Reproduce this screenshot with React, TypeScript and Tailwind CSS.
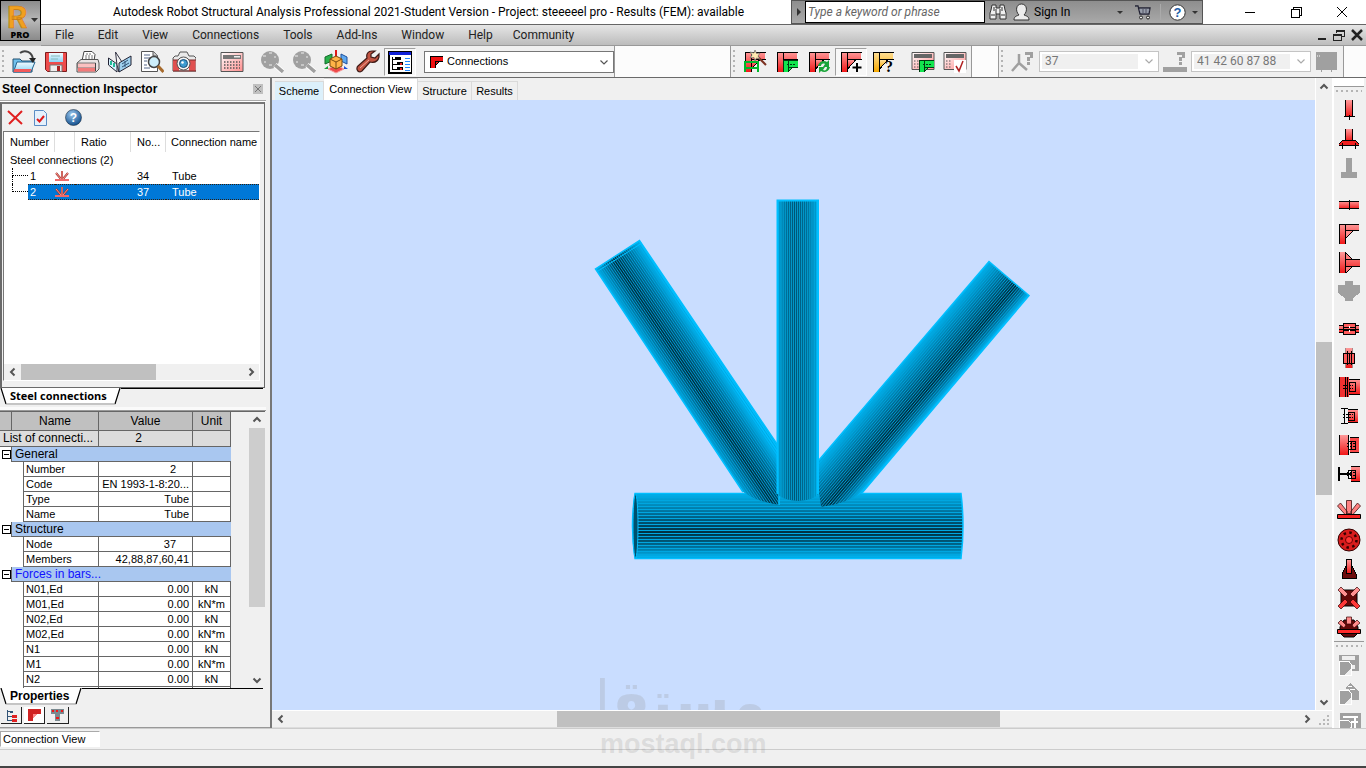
import { ReactNode } from 'react'

const ui = "font-['Open_Sans','Noto_Sans',sans-serif]"

/* ---------- shared bits ---------- */

function Px({ size = 24, children }: { size?: number; children: ReactNode }) {
  return (
    <svg width={size} height={size} viewBox="0 0 24 24" className="shrink-0" aria-hidden="true">
      {children}
    </svg>
  )
}

function Defs() {
  return (
    <svg width="0" height="0" className="absolute" aria-hidden="true">
      <defs>
        <linearGradient id="red" x1="0" y1="0" x2="0" y2="1">
          <stop offset="0" stopColor="#ff9a9a" />
          <stop offset="1" stopColor="#f01818" />
        </linearGradient>
        <linearGradient id="amber" x1="0" y1="0" x2="0" y2="1">
          <stop offset="0" stopColor="#ffe09a" />
          <stop offset="1" stopColor="#f5a800" />
        </linearGradient>
        <linearGradient id="blue" x1="0" y1="0" x2="0" y2="1">
          <stop offset="0" stopColor="#f2fbff" />
          <stop offset="1" stopColor="#8cd4f5" />
        </linearGradient>
        <linearGradient id="calc" x1="0" y1="0" x2="1" y2="1">
          <stop offset="0" stopColor="#ffffff" />
          <stop offset="1" stopColor="#ff8c8c" />
        </linearGradient>
        <radialGradient id="ball" cx="0.4" cy="0.3" r="0.7">
          <stop offset="0" stopColor="#9cc8ee" />
          <stop offset="1" stopColor="#14518f" />
        </radialGradient>
      </defs>
    </svg>
  )
}

function Chevron({ dir, color = '#555', thin }: { dir: 'up' | 'down' | 'left' | 'right'; color?: string; thin?: boolean }) {
  const paths = {
    up: 'M1.5 6.5 5 3l3.5 3.5',
    down: 'M1.5 3.5 5 7l3.5-3.5',
    left: 'M6.5 1.5 3 5l3.5 3.5',
    right: 'M3.5 1.5 7 5 3.5 8.5',
  }
  return (
    <svg width="10" height="10" viewBox="0 0 10 10" aria-hidden="true">
      <path d={paths[dir]} fill="none" stroke={color} strokeWidth={thin ? 1.2 : 2} />
    </svg>
  )
}

function Grip() {
  return <span className="my-1 ml-0.5 mr-1 w-0.5 self-stretch bg-[repeating-linear-gradient(#b4b4b4_0_2px,transparent_2px_5px)]" />
}

function ToolButton({ label, active, children }: { label: string; active?: boolean; children: ReactNode }) {
  return (
    <button
      type="button"
      aria-label={label}
      className={`flex h-7 w-8 shrink-0 items-center justify-center ${
        active ? 'border border-[#a0a0a0] border-b-white border-r-white bg-[#f7f7f7]' : ''
      }`}
    >
      {children}
    </button>
  )
}

/* ---------- main toolbar icons ---------- */

const OpenIcon = () => (
  <Px>
    <path d="M1 9h7l2 2h10v11H1z" fill="#6fc0ec" stroke="#24506f" />
    <path d="M5 12h18l-4 10H1.500z" fill="url(#blue)" stroke="#24658f" />
    <path d="M2.500 19h17l-1.300 3H1.500z" fill="#f25a5a" />
    <path d="M8 3c5-4 12-1 13 6" fill="none" stroke="#444" strokeWidth="2" />
    <path d="M17 8h7l-3 5z" fill="#222" />
  </Px>
)
const SaveIcon = () => (
  <Px>
    <path d="M1.500 2.500h21v19h-19l-2-2z" fill="#ee4b4b" stroke="#7c1c1c" />
    <path d="M5 3h14v9H5z" fill="url(#blue)" />
    <path d="M7 6h9M7 9h7" stroke="#8bb" />
    <path d="M6 15h12v6.500H6z" fill="#eee" stroke="#777" />
    <path d="M13 16h3v5h-3z" fill="#a22" />
  </Px>
)
const PrintIcon = () => (
  <Px>
    <path d="M6 11 8 1.500h8l3 3L18 11z" fill="#fff" stroke="#444" />
    <path d="M10 4h5M9 6h8M9 8h8" stroke="#777" strokeDasharray="2 1" />
    <path d="M1 13 5 9.500h17l1 3.500v6l-3 3H1z" fill="#e9e4e4" stroke="#555" />
    <path d="M1.500 13h18v5h-18z" fill="#fbc0c0" stroke="#777" />
    <path d="M2 18h17v3.500H2z" fill="#f27a7a" />
    <path d="M19.500 13v8" stroke="#444" />
  </Px>
)
const BookIcon = () => (
  <Px>
    <path d="M.500 8 9 14v8L.500 15z" fill="#d8f1ff" stroke="#223" />
    <path d="M7.500 2 14 12l-3 10-2-7z" fill="#f3f3f3" stroke="#334" />
    <path d="M3 11v4M6 13v4" stroke="#2b9" strokeWidth="2" />
    <path d="M11 22V13l12-7v9z" fill="#9fd0ee" stroke="#223" />
    <path d="m14 14 6-4M14 17l7-4M17 11v6" stroke="#357" />
  </Px>
)
const PreviewIcon = () => (
  <Px>
    <path d="M1.500 1.500h12l4 4v16h-16z" fill="#fff" stroke="#555" />
    <path d="M13 1.500V6h5" fill="#ccc" stroke="#555" />
    <path d="M4 5h6M4 8h6M4 11h3M4 15h3M4 18h6" stroke="#568" />
    <circle cx="14" cy="12" r="5.500" fill="#cdeefa" stroke="#444" strokeWidth="1.500" />
    <path d="m18 16 5.500 6" stroke="#a76a2c" strokeWidth="3" />
  </Px>
)
const CameraIcon = () => (
  <Px>
    <path d="M6 6 8 2h7l2 4h5l2 2v13H1V8l2-2z" fill="#e9e9e9" stroke="#555" />
    <path d="M1 10h6v11H1zM17 10h6.500v11H17z" fill="#e05050" />
    <path d="M1 10h23M1 21h23" stroke="#7c2d2d" />
    <circle cx="11.500" cy="13.500" r="6.500" fill="#f4f4f4" stroke="#555" />
    <circle cx="11.500" cy="13.500" r="4" fill="#3d9bd0" stroke="#1c4f78" />
    <circle cx="10.500" cy="12.500" r="1.300" fill="#fff" />
  </Px>
)
const CalcIcon = () => (
  <Px>
    <path d="M1 2.500h22v19H1z" fill="url(#calc)" stroke="#555" />
    <path d="M3 5h18v4H3z" fill="#777" />
    <path d="M14 6h6v1.500h-6z" fill="#eee" />
    <path d="M4 12h16M4 15h16M4 18h16" stroke="#555" strokeWidth="1.500" strokeDasharray="1.500 1.500" />
  </Px>
)
const GrayZoomIcon = () => (
  <Px>
    <circle cx="10" cy="10" r="9" fill="#a0a0a0" />
    <path d="M3 6h3M9 3h3M4 12h2M14 7h2M9 15h3" stroke="#eee" />
    <path d="m15 15 8 7" stroke="#fff" strokeWidth="5" />
    <path d="m15 15 8 7" stroke="#a0a0a0" strokeWidth="3.500" />
  </Px>
)
const CubeIcon = () => (
  <Px>
    <path d="m1 7 7-3v7l-7 3z" fill="#28b04a" stroke="#146a2a" />
    <path d="m23 7-6-3v7l6 3z" fill="#5fa8ee" stroke="#1d4f9c" />
    <path d="M12 0v8" stroke="#e01818" strokeWidth="2" />
    <path d="m4 19 8 4 8-4-8-4z" fill="#ee4a4a" stroke="#f6a0a0" />
    <path d="m12 6 6 3v7l-6 3-6-3V9z" fill="#ffb347" stroke="#7a4a0e" />
    <path d="m6 9 6 3 6-3M12 12v7" fill="none" stroke="#7a4a0e" />
    <path d="m0 19 4-3v3z" fill="#18a038" />
    <path d="m24 19-4-3v3z" fill="#1850d8" />
  </Px>
)
const WrenchIcon = () => (
  <Px>
    <path
      d="M16 1c-4 0-6 3-5 7l-9 8c-2 2-1 6 2 6l2-1 8-9c5 1 8-1 9-5V4l-4 4-4-1V4l4-3z"
      fill="#c25442"
      stroke="#3e1a16"
      strokeWidth="1.200"
    />
    <path d="m4 18 9-8" stroke="#f3a79a" />
  </Px>
)
const InspectorIcon = () => (
  <Px>
    <g shapeRendering="crispEdges">
      <path d="M0 1h24v22H0z" fill="#fff" />
      <path d="M.500 1.500h23v21H.500z" fill="none" stroke="#000" strokeWidth="2" />
      <path d="M1 2h22v3H1z" fill="#1020d8" />
      <path d="M4 7v12M4 9h5M4 14h5M4 19h5" stroke="#000" fill="none" />
      <path d="M7 7h6v3H7zM9 12h6v3H9zM9 17h6v3H9z" fill="#000" />
      <path d="M12 13h2v2h-2zM12 18h2v2h-2z" fill="#e22" />
      <path d="M17 8h5M17 11h5M17 14h5M17 17h5M17 20h5" stroke="#28f" />
    </g>
  </Px>
)

/* ---------- connection toolbar icons ---------- */

const Corner = ({ fill = 'url(#red)' }: { fill?: string }) => (
  <g shapeRendering="crispEdges">
    <path d="M2 2h6v20H2zM8 2h14v7H8z" fill={fill} />
    <path d="M9 10h7l-7 8z" fill={fill} />
    <path d="M2 2.500h21M8 9.500h15M2.500 2v20M8.500 2v20M17 9.500l-8 9" stroke="#000" fill="none" />
  </g>
)
const WandIcon = () => (
  <Px>
    <Corner />
    <g shapeRendering="crispEdges">
      <path d="M1 12h15M1 18h15M2 12v10M15 12v10" stroke="#00b82b" strokeWidth="2" />
    </g>
    <path d="m14 6 9 9" stroke="#7c3020" strokeWidth="2" />
    <path d="m12 0 1.500 3.500L17 3l-2 3 2 3-3.500-1L12 11l-1-3.500L7 8l2-3-2-3 4 1z" fill="#ffe9b0" stroke="#666" strokeWidth=".7" />
  </Px>
)
const GreenConn = () => (
  <g shapeRendering="crispEdges">
    <path d="M8 10h15v8h-6l-4 4H8z" fill="#12e64e" />
    <path d="M8 10.500h15M8 22V10M13.500 10v12M14 17.500h9M17 18l-4 4" stroke="#003c12" fill="none" />
    <path d="M12 14.500h9" stroke="#003c12" strokeDasharray="2 1" />
  </g>
)
const EditConnIcon = () => (
  <Px>
    <Corner />
    <GreenConn />
  </Px>
)
const RefreshConnIcon = () => (
  <Px>
    <Corner />
    <path d="M11 16c1-5 6-6 9-4l2-2v7h-6l2-3c-2-1-4 0-4 2zM23 17c-1 5-6 6-9 4l-2 2v-6h6l-2 3c2 1 4 0 4-3z" fill="#1aa53a" />
  </Px>
)
const AddConnIcon = () => (
  <Px>
    <Corner />
    <path d="M18 13v9M13.500 17.500h9" stroke="#000" strokeWidth="2" />
  </Px>
)
const AskConnIcon = () => (
  <Px>
    <Corner fill="url(#amber)" />
    <text x="14" y="22" fontSize="16" fontWeight="700" fontFamily="Liberation Serif">
      ?
    </text>
  </Px>
)
const CalcConnIcon = () => (
  <Px>
    <path d="M1 2.500h22v17H1z" fill="url(#calc)" stroke="#555" />
    <path d="M3 4h18v4H3z" fill="#666" />
    <path d="M3 11h6M3 14h6M3 17h6" stroke="#555" strokeDasharray="1.500 1.500" />
    <GreenConn />
  </Px>
)
const CalcCheckIcon = () => (
  <Px>
    <path d="M1 2.500h22v17H1z" fill="url(#calc)" stroke="#555" />
    <path d="M3 4h18v4H3z" fill="#666" />
    <path d="M3 11h6M3 14h6M3 17h6" stroke="#555" strokeDasharray="1.500 1.500" />
    <path d="M11 10h12v13H11z" fill="#fff" />
    <path d="m13 16 3 5 4-10" fill="none" stroke="#b02020" strokeWidth="1.500" />
  </Px>
)
const GrayQuestion = () => <path d="M14 2h8v6h-3v3h-3V7h3V5h-5zM16 12h3v3h-3z" fill="#a0a0a0" />
const GrayNodeIcon = () => (
  <Px>
    <path d="M8 4v9L1 21M8 13l8 7" fill="none" stroke="#a0a0a0" strokeWidth="2.500" />
    <GrayQuestion />
  </Px>
)
const GrayBarIcon = () => (
  <Px>
    <GrayQuestion />
    <path d="M0 17h24v5H0z" fill="#a0a0a0" />
  </Px>
)
const GrayTableIcon = () => (
  <Px>
    <path d="M1 2h21v18H1zM6 20h1v2H6zM16 20h1v2h-1z" fill="#a0a0a0" />
    <path d="M2 6h4" stroke="#fff" strokeDasharray="1 1" />
  </Px>
)

/* ---------- side toolbar icons ---------- */

const R = 'url(#red)'

const sideIcons: { label: string; art: ReactNode }[][] = [
  [
    {
      label: 'Pinned column base',
      art: (
        <>
          <path d="M9 2h6v17H9z" fill={R} />
          <path d="M8.500 2v17M15.500 2v17M7 18.500h11M12.500 17v5" stroke="#000" fill="none" />
        </>
      ),
    },
    {
      label: 'Fixed column base',
      art: (
        <>
          <path d="M9 2h6v12H9z" fill={R} />
          <path d="M8.500 2v12M15.500 2v12" stroke="#000" />
          <path d="M6 13h12l4 4v2H2v-2z" fill="#f02020" />
          <path d="M6 13.500h12M2 18.500h20M2 17l4-4M22 17l-4-4" stroke="#000" />
          <path d="M5.500 16v6M18.500 16v6" stroke="#000" />
        </>
      ),
    },
    { label: 'Concrete base', art: <path d="M9 2h6v14h5v6H4v-6h5z" fill="#a0a0a0" /> },
  ],
  [
    {
      label: 'Beam splice',
      art: (
        <>
          <path d="M2 8h20v8H2z" fill={R} />
          <path d="M2 8.500h20M2 15.500h20M12.500 7v10" stroke="#000" />
        </>
      ),
    },
    {
      label: 'Frame knee',
      art: (
        <>
          <path d="M2 2h7v20H2zM9 2h13v7H9z" fill={R} />
          <path d="M9 9h7l-7 7z" fill="#ff8c8c" />
          <path d="M2.500 22V2.500H22M8.500 3v19M9 8.500h13M16 9l-7 7" fill="none" stroke="#000" />
        </>
      ),
    },
    {
      label: 'Beam to column',
      art: (
        <>
          <path d="M2 1h7v21H2zM9 8h14v8H9z" fill={R} />
          <path d="M9 2v6h6zM9 16h6l-6 6z" fill="#ff7a7a" />
          <path d="M2.500 1v21M8.500 1v21M9 8.500h14M9 15.500h14M9 2l6 6M15 16l-6 6" stroke="#000" />
        </>
      ),
    },
    { label: 'Gusset plate', art: <path d="M8 1h8v4h7v8l-7 5v3H8v-3l-7-5V5h7z" fill="#a0a0a0" /> },
  ],
  [
    {
      label: 'Horizontal splice',
      art: (
        <>
          <path d="M2 8h20v8H2z" fill={R} />
          <path d="M2 8.500h20M2 15.500h20" stroke="#000" />
          <path d="M6.500 6.500h12v11h-12z" fill="#ff5c5c" stroke="#000" />
          <path d="M6 10.500h12M6 13.500h12M2 12h20" fill="none" stroke="#000" />
          <path d="M12 9h1v2h-1zM12 13h1v2h-1z" fill="#fff" />
        </>
      ),
    },
    {
      label: 'Vertical splice',
      art: (
        <>
          <path d="M8 2h8v20H8z" fill={R} />
          <path d="M8.500 2v20M15.500 2v20" stroke="#a88" />
          <path d="M6.500 7.500h11v10h-11z" fill="#ff5c5c" stroke="#000" />
          <path d="M10.500 5v14M14.500 5v14M12.500 8v10" stroke="#000" fill="none" />
        </>
      ),
    },
    {
      label: 'Web angle to column',
      art: (
        <>
          <path d="M2 2h10v20H2z" fill="#f03030" />
          <path d="M12 4h11v15H12z" fill={R} />
          <path d="M2.500 2v20M8.500 2v20M10.500 2v20M12 4.500h11M12 19.500h11M12 7.500h6v9h-6z" stroke="#000" fill="none" />
          <path d="M6 10.500h10M6 13.500h10" stroke="#000" strokeDasharray="2 1" />
        </>
      ),
    },
    {
      label: 'Beam to web',
      art: (
        <>
          <path d="M4 4.500h7M4 19.500h7M7.500 5v14" stroke="#000" />
          <path d="M11 5h10v14H11z" fill={R} />
          <path d="M11 5.500h10M11 18.500h10M11 8.500h6v8h-6z" stroke="#000" fill="none" />
          <path d="M6 10.500h10M6 13.500h10" stroke="#000" strokeDasharray="2 1" />
        </>
      ),
    },
    {
      label: 'Fin plate',
      art: (
        <>
          <path d="M2 2h10v20H2z" fill={R} />
          <path d="M2.500 2v20M11.500 2v20" stroke="#000" />
          <path d="M13 4h9v15h-9z" fill="#f84848" />
          <path d="M13 4.500h9M13 19.500h9M11.500 8.500h7v8h-7zM14.500 8v8" fill="none" stroke="#000" />
          <path d="M10 10.500h9M10 13.500h9" stroke="#000" strokeDasharray="2 1" />
        </>
      ),
    },
    {
      label: 'Bracket',
      art: (
        <>
          <path d="M2 5v14M2 12h12" stroke="#000" strokeWidth="2" />
          <path d="M14 4h9v15h-9z" fill={R} />
          <path d="M14 4.500h9M14 19.500h9M11.500 8.500h7v8h-7zM14.500 8v8" fill="none" stroke="#000" />
          <path d="M10 10.500h9M10 13.500h9" stroke="#000" strokeDasharray="2 1" />
        </>
      ),
    },
  ],
  [
    {
      label: 'Tube',
      art: (
        <g shapeRendering="auto">
          <path d="M9.500 1.500h5v13h-5zM.500 7l3-3 7 9-2 3zM23.500 7l-3-3-7 9 2 3z" fill="#ff8080" stroke="#401010" strokeWidth=".8" />
          <path d="M.500 15.500h23v4H.500z" fill="#f42020" stroke="#000" />
        </g>
      ),
    },
    {
      label: 'Flange',
      art: (
        <g shapeRendering="auto">
          <circle cx="12" cy="12" r="11" fill="#d81c1c" stroke="#300" />
          <circle cx="12" cy="12" r="7.500" fill="none" stroke="#300" strokeWidth="2.500" strokeDasharray="2.500 3.400" />
          <circle cx="12" cy="12" r="3.500" fill="#ff3434" stroke="#600" />
        </g>
      ),
    },
    {
      label: 'Base cone',
      art: (
        <>
          <path d="m9 9-4 8v4h14v-4l-4-8z" fill="#6c0c0c" stroke="#000" />
          <path d="M9.500 2.500h5v14h-5z" fill={R} stroke="#000" />
        </>
      ),
    },
    {
      label: 'Cross bracing',
      art: (
        <g shapeRendering="auto">
          <path d="M4 4h16v16H4z" fill="#640808" stroke="#000" />
          <path d="m1 4 3-3 7 7-3 3zM23 4l-3-3-7 7 3 3z" fill="#ff9090" stroke="#300" strokeWidth=".7" />
          <path d="m1 20 3 3 7-7-3-3zM23 20l-3 3-7-7 3-3z" fill="#ff3838" stroke="#300" strokeWidth=".7" />
        </g>
      ),
    },
    {
      label: 'Chord gusset',
      art: (
        <g shapeRendering="auto">
          <path d="M3 12 7 5h10l4 7v6l-4 4H7l-4-4z" fill="#640808" stroke="#000" />
          <path d="M9.500 2v7h5V2zM1 8l3-3 5 5-2 3zM23 8l-3-3-5 5 2 3z" fill="#ff8a8a" stroke="#300" strokeWidth=".7" />
          <path d="M.500 14.500h23v4H.500z" fill="#ff2a2a" stroke="#000" />
        </g>
      ),
    },
  ],
]

const disabledIcons: { label: string; art: ReactNode }[] = [
  {
    label: 'Save view',
    art: (
      <>
        <path d="M2 2h20v16h-9V8H2z" fill="#a0a0a0" />
        <path d="M5 3h13v4H5zM15 12h3v4h-3z" fill="#eee" />
        <path d="M2 8h9l3 3v11H2z" fill="#a0a0a0" stroke="#fff" />
        <path d="m8 22 6-7v7z" fill="#f0f0f0" />
      </>
    ),
  },
  {
    label: 'Print view',
    art: (
      <>
        <path d="m8 6 5-5 9 8v9h-9V8z" fill="#a0a0a0" />
        <path d="M11 4h4M13 7h5" stroke="#fff" />
        <path d="M2 8h9l3 3v11H2z" fill="#a0a0a0" stroke="#fff" />
        <path d="m8 22 6-7v7z" fill="#f0f0f0" />
      </>
    ),
  },
  {
    label: 'Table view',
    art: (
      <>
        <path d="M3 2h21v20H3z" fill="#a0a0a0" />
        <path d="M6 6h15M14 11h7M18 6v14" stroke="#fff" strokeWidth="2" />
        <path d="M2 9h9l3 3v10H2z" fill="#a0a0a0" stroke="#fff" />
        <path d="m8 22 6-7v7z" fill="#f0f0f0" />
      </>
    ),
  },
]

/* ---------- header ---------- */

const menus = ['File', 'Edit', 'View', 'Connections', 'Tools', 'Add-Ins', 'Window', 'Help']

function SearchCluster() {
  return (
    <div className="flex w-[412px] shrink-0 items-center border border-[#555] bg-linear-to-b from-[#8e8e8e] to-[#a9a9a9]">
      <button type="button" aria-label="Toggle search" className="flex w-[13px] justify-center">
        <svg width="6" height="8" viewBox="0 0 6 8">
          <path d="M1 0v8l4-4z" fill="#333" />
        </svg>
      </button>
      <input
        aria-label="Search help"
        placeholder="Type a keyword or phrase"
        className="h-[22px] w-[180px] border border-black bg-white px-0.5 text-xs italic placeholder:text-[#666]"
      />
      <button type="button" aria-label="Search" className="ml-1">
        <svg width="18" height="18" viewBox="0 0 18 18">
          <path d="M3 2h4v3h4V2h4l1 5 1 3v6h-6v-5H7v5H1v-6l1-3z" fill="#f0f0f0" stroke="#333" />
          <path d="M7 6v5M11 6v5M2 12h4M12 12h4M5 4v4M13 4v4" stroke="#333" />
        </svg>
      </button>
      <button type="button" className="ml-1.5 flex items-center gap-1 text-xs text-black">
        <svg width="17" height="18" viewBox="0 0 17 18">
          <path d="M1 17c0-4 3-4 5-5-4-4-3-11 2.500-11S15 8 11 12c2 1 5 1 5 5z" fill="#ececec" stroke="#333" />
        </svg>
        Sign In
      </button>
      <span className="ml-auto mr-[11px] border-x-[3px] border-t-[3px] border-x-transparent border-t-[#333]" />
      <button type="button" aria-label="App store">
        <svg width="18" height="18" viewBox="0 0 18 18">
          <path d="M1 3h3l2 8h9l1-6H5" fill="#d9e6ee" stroke="#223" strokeWidth="1.300" />
          <path d="M5 7h11M6 9h9M9 5v6M12 5v6" stroke="#556" />
          <circle cx="7" cy="14.500" r="1.500" fill="#eee" stroke="#222" />
          <circle cx="14" cy="14.500" r="1.500" fill="#eee" stroke="#222" />
        </svg>
      </button>
      <span className="mx-2 h-4 w-px bg-[#aaa]" />
      <button type="button" aria-label="Help">
        <svg width="17" height="17" viewBox="0 0 17 17">
          <circle cx="8.500" cy="8.500" r="7.700" fill="#fff" stroke="#333" />
          <text x="8.500" y="13" fontSize="13" fontWeight="700" textAnchor="middle" fill="#1d5ea8" fontFamily="Liberation Sans">
            ?
          </text>
        </svg>
      </button>
      <span className="ml-1.5 mr-1 border-x-[3px] border-t-[3px] border-x-transparent border-t-[#333]" />
    </div>
  )
}

function WindowControls() {
  return (
    <div className="ml-6 mr-px flex shrink-0">
      <button type="button" aria-label="Minimize" className="flex w-[46px] items-center justify-center">
        <span className="h-px w-2.5 bg-black" />
      </button>
      <button type="button" aria-label="Restore" className="flex w-[46px] items-center justify-center">
        <svg width="11" height="11" viewBox="0 0 11 11" shapeRendering="crispEdges">
          <path d="M.500 2.500h8v8h-8zM2.500 2.500v-2h8v8h-2" fill="none" stroke="#000" />
        </svg>
      </button>
      <button type="button" aria-label="Close" className="flex w-[46px] items-center justify-center">
        <svg width="12" height="12" viewBox="0 0 12 12">
          <path d="m1 1 10 10M11 1 1 11" stroke="#000" />
        </svg>
      </button>
    </div>
  )
}

function Header() {
  return (
    <header className="flex shrink-0 bg-[#c0c0c0] font-['Roboto',sans-serif]">
      <button
        type="button"
        aria-label="Application menu"
        className="h-[41px] w-[41px] shrink-0 border border-black bg-linear-to-b from-[#8c8c8c] via-[#b8b8b8] to-[#8a8a8a]"
      >
        <svg width="39" height="39" viewBox="0 0 39 39" className="overflow-visible">
          <text x="6" y="27" fontSize="32" fontWeight="700" fontFamily="Roboto" fill="#f0a020" stroke="#c47a12" strokeWidth=".6">
            R
          </text>
          <path d="M30 17h7l-3.500 4z" fill="#333" />
          <text x="19" y="37" fontSize="9" fontWeight="800" textAnchor="middle" fontFamily="Open Sans">
            PRO
          </text>
        </svg>
      </button>
      <div className="min-w-0 flex-1">
        <div className="flex h-[25px] border-b border-[#666] bg-white">
          <h1 className="min-w-0 flex-1 truncate pl-[72px] text-xs leading-6 text-black">
            Autodesk Robot Structural Analysis Professional 2021-Student Version - Project: steeeeel pro - Results (FEM): available
          </h1>
          <SearchCluster />
          <WindowControls />
        </div>
        <nav className="flex h-[21px] items-center border-b border-[#999] bg-linear-to-b from-[#e6e6e6] to-[#bcbcbc] pl-3.5 text-xs text-[#222]">
          <div className="flex gap-6">
            {menus.map((m) => (
              <button key={m} type="button">
                {m}
              </button>
            ))}
          </div>
          <button type="button" className="ml-5">
            Community
          </button>
          <div className="ml-auto mr-[3px] flex items-center gap-1.5 text-[#222]">
            <button type="button" aria-label="Minimize document" className="h-2.5">
              <span className="mt-2 block h-0.5 w-2 bg-[#222]" />
            </button>
            <button type="button" aria-label="Restore document">
              <svg width="13" height="12" viewBox="0 0 13 12" shapeRendering="crispEdges">
                <path d="M4 4V1h8v6H9M1 5h8v6H1z" fill="none" stroke="#222" />
                <path d="M4 2h8M1 6h8" stroke="#222" />
              </svg>
            </button>
            <button type="button" aria-label="Close document">
              <svg width="12" height="12" viewBox="0 0 12 12">
                <path d="m1 1 10 10M11 1 1 11" stroke="#222" strokeWidth="2.500" />
              </svg>
            </button>
          </div>
        </nav>
      </div>
    </header>
  )
}

/* ---------- toolbars ---------- */

function NumberSelect({ label, value }: { label: string; value: string }) {
  return (
    <div className="relative h-[21px] w-[120px] shrink-0 border border-[#c4c4c4] bg-white p-0.5">
      <select
        aria-label={label}
        disabled
        className="block h-[15px] w-[96px] appearance-none bg-[#f0f0f0] pl-[3px] font-['Roboto',sans-serif] text-xs leading-[15px] text-[#777] opacity-100"
      >
        <option>{value}</option>
      </select>
      <span className="pointer-events-none absolute right-1 top-1">
        <Chevron dir="down" color="#aaa" thin />
      </span>
    </div>
  )
}

function Toolbars() {
  return (
    <div className="flex h-8 shrink-0 items-stretch border-b border-[#6a6a6a] bg-[#fcfcfc]">
      <div className="flex items-center border-r border-[#999] bg-[#f0f0f0]">
        <Grip />
        <ToolButton label="Open"><OpenIcon /></ToolButton>
        <ToolButton label="Save"><SaveIcon /></ToolButton>
        <ToolButton label="Print"><PrintIcon /></ToolButton>
        <ToolButton label="Printout composition"><BookIcon /></ToolButton>
        <ToolButton label="Print preview"><PreviewIcon /></ToolButton>
        <ToolButton label="Screen capture"><CameraIcon /></ToolButton>
        <span className="w-4" />
        <ToolButton label="Calculations"><CalcIcon /></ToolButton>
        <span className="w-2" />
        <ToolButton label="Zoom window"><GrayZoomIcon /></ToolButton>
        <ToolButton label="Zoom all"><GrayZoomIcon /></ToolButton>
        <ToolButton label="Projection"><CubeIcon /></ToolButton>
        <ToolButton label="Tools"><WrenchIcon /></ToolButton>
        <ToolButton label="Connection inspector" active><InspectorIcon /></ToolButton>
        <div className="relative ml-2 flex w-[190px] items-center">
          <select
            aria-label="Layout"
            className="h-[22px] w-full appearance-none border border-[#777] bg-white pl-[22px] text-[11px] text-black"
          >
            <option>Connections</option>
          </select>
          <svg width="14" height="12" viewBox="0 0 14 12" className="pointer-events-none absolute left-[6px] top-[5px]" shapeRendering="crispEdges">
            <path d="M0 0h13v5H9l-4 4v3H0z" fill="#f01010" />
            <path d="M0 .500h13M5 5.500h8M5 5v7M.500 0v12M5 10l5-5" stroke="#000" fill="none" />
          </svg>
          <span className="pointer-events-none absolute right-[5px] top-[6px]">
            <Chevron dir="down" thin />
          </span>
        </div>
      </div>

      <div className="ml-[115px] flex shrink-0 items-center border-x border-[#999] bg-[#f0f0f0]">
        <Grip />
        <ToolButton label="Connection wizard"><WandIcon /></ToolButton>
        <ToolButton label="Edit connection"><EditConnIcon /></ToolButton>
        <ToolButton label="Update connection"><RefreshConnIcon /></ToolButton>
        <ToolButton label="New connection" active><AddConnIcon /></ToolButton>
        <ToolButton label="Connection query"><AskConnIcon /></ToolButton>
        <span className="w-2" />
        <ToolButton label="Calculate connection"><CalcConnIcon /></ToolButton>
        <ToolButton label="Verify connection"><CalcCheckIcon /></ToolButton>
      </div>

      <div className="ml-[26px] flex shrink-0 items-center border-x border-[#999] bg-[#f0f0f0]">
        <Grip />
        <ToolButton label="Node selection"><GrayNodeIcon /></ToolButton>
        <NumberSelect label="Node" value="37" />
        <ToolButton label="Bar selection"><GrayBarIcon /></ToolButton>
        <NumberSelect label="Bars" value="41 42 60 87 88" />
        <ToolButton label="Selection table"><GrayTableIcon /></ToolButton>
      </div>
    </div>
  )
}

/* ---------- left panel ---------- */

const connections = [
  { no: 1, node: 34, name: 'Tube', selected: false },
  { no: 2, node: 37, name: 'Tube', selected: true },
]

function TubeGlyph() {
  return (
    <svg width="14" height="12" viewBox="0 0 14 12" className="block" aria-hidden="true">
      <path d="M7 1v8M1 3l5 6M13 3 8 9" stroke="#a03030" strokeWidth="2" />
      <path d="M7 1v8M1 3l5 6M13 3 8 9" stroke="#ff9a8a" />
      <path d="M0 10h14" stroke="#f06a6a" strokeWidth="2" />
    </svg>
  )
}

function ConnectionList() {
  return (
    <div className="flex h-[250px] w-[257px] flex-col overflow-hidden border border-b-white border-r-white border-[#777] bg-white">
      <table className="w-full table-fixed border-separate border-spacing-0 text-left text-[11px]">
        <colgroup>
          <col className="w-[51px]" />
          <col className="w-5" />
          <col className="w-14" />
          <col className="w-[35px]" />
          <col />
        </colgroup>
        <thead>
          <tr className="h-5">
            <th className="border-r border-[#ddd] pl-1.5 font-normal">Number</th>
            <th className="border-r border-[#ddd]" aria-label="Type" />
            <th className="border-r border-[#ddd] pl-1.5 font-normal">Ratio</th>
            <th className="border-r border-[#ddd] pl-1.5 font-normal">No...</th>
            <th className="whitespace-nowrap pl-[5px] font-normal">Connection name</th>
          </tr>
        </thead>
        <tbody>
          <tr className="h-4">
            <td colSpan={5} className="pl-1.5 leading-4">Steel connections (2)</td>
          </tr>
          {connections.map((c) => {
            const cell = c.selected ? 'border-y border-dotted border-[#302010] bg-[#0078d7] leading-[14px] text-white' : 'leading-4'
            return (
              <tr key={c.no} className="h-4">
                <td>
                  <div className="flex h-4">
                    <span className="ml-2 flex h-4 w-4 flex-col">
                      <span className="h-2 border-b border-l border-dotted border-black" />
                      {!c.selected && <span className="h-2 border-l border-dotted border-black" />}
                    </span>
                    <span className={`flex-1 pl-0.5 ${cell}`}>{c.no}</span>
                  </div>
                </td>
                <td className={cell}><TubeGlyph /></td>
                <td className={cell} />
                <td className={`pl-1.5 ${cell}`}>{c.node}</td>
                <td className={`pl-1.5 ${cell}`}>{c.name}</td>
              </tr>
            )
          })}
        </tbody>
      </table>
      <div className="mt-auto flex h-4 items-center bg-[#f0f0f0]">
        <button type="button" aria-label="Scroll left" className="flex w-[17px] justify-center"><Chevron dir="left" /></button>
        <span className="h-full w-[135px] bg-[#c0c0c0]" />
        <button type="button" aria-label="Scroll right" className="ml-auto flex w-[17px] justify-center"><Chevron dir="right" /></button>
      </div>
    </div>
  )
}

function SlantTab({ label, width, className = '' }: { label: string; width: number; className?: string }) {
  return (
    <div className="relative flex h-[17px] shrink-0 items-start">
      <svg width={width} height="17" viewBox={`0 0 ${width} 17`} aria-hidden="true">
        <path d={`M1 0 6 15H${width - 6}L${width - 1} 0z`} fill="#fff" />
        <path d={`M1 0 6 16M${width - 6} 16 ${width - 1} 0`} stroke="#000" strokeWidth="1.200" />
        <path d={`M6 16H${width - 6}`} stroke="#999" />
      </svg>
      <button type="button" className={`absolute left-2.5 top-0 leading-4 font-bold ${className}`}>
        {label}
      </button>
      <span className="mr-[7px] h-px flex-1 bg-black" />
    </div>
  )
}

const sections = [
  {
    title: 'General',
    rows: [
      ['Number', '2', ''],
      ['Code', 'EN 1993-1-8:20...', ''],
      ['Type', 'Tube', ''],
      ['Name', 'Tube', ''],
    ],
  },
  {
    title: 'Structure',
    rows: [
      ['Node', '37', ''],
      ['Members', '42,88,87,60,41', ''],
    ],
  },
  {
    title: 'Forces in bars...',
    link: true,
    rows: [
      ['N01,Ed', '0.00', 'kN'],
      ['M01,Ed', '0.00', 'kN*m'],
      ['N02,Ed', '0.00', 'kN'],
      ['M02,Ed', '0.00', 'kN*m'],
      ['N1', '0.00', 'kN'],
      ['M1', '0.00', 'kN*m'],
      ['N2', '0.00', 'kN'],
      ['', '', ''],
    ],
  },
]

function PropertyTable() {
  const line = 'border-b border-r border-[#666]'
  return (
    <table className="w-[231px] table-fixed border-separate border-spacing-0 text-[11px]">
      <colgroup>
        <col className="w-3" />
        <col className="w-3" />
        <col className="w-[75px]" />
        <col className="w-[94px]" />
        <col className="w-[38px]" />
      </colgroup>
      <thead className="bg-[#c0c0c0] text-xs">
        <tr className="h-[19px]">
          <th className={line} aria-label="Group" />
          <th colSpan={2} className={`font-normal ${line}`}>Name</th>
          <th className={`font-normal ${line}`}>Value</th>
          <th className={`font-normal ${line}`}>Unit</th>
        </tr>
      </thead>
      <tbody>
        <tr className="h-4 bg-[#dcdcdc] text-xs leading-[15px]">
          <td colSpan={3} className={`pl-[3px] ${line}`}>List of connecti...</td>
          <td className={`pr-3.5 text-center ${line}`}>2</td>
          <td className={line} />
        </tr>
      </tbody>
      {sections.map((s) => (
        <tbody key={s.title} className="bg-white">
          <tr className="h-[15px] text-xs leading-[14px]">
            <td className="border-r border-[#666] bg-white">
              <button type="button" aria-label={`Collapse ${s.title}`} className="mx-0.5 flex h-[9px] w-[9px] items-center justify-center border border-black">
                <span className="h-px w-[5px] bg-black" />
              </button>
            </td>
            <td colSpan={4} className={`border-b border-[#666] bg-[#a9c7f0] pl-[3px] ${s.link ? 'text-[#1010ff]' : ''}`}>
              {s.title}
            </td>
          </tr>
          {s.rows.map(([name, value, unit]) => (
            <tr key={name} className="h-[15px] leading-[14px]">
              <td colSpan={2} className="border-r border-[#666]" />
              <td className={`pl-0.5 ${line}`}>{name}</td>
              <td className={`text-right ${/^\d+$/.test(value) ? 'pr-4' : 'pr-[3px]'} ${line}`}>{value}</td>
              <td className={`text-center ${line}`}>{unit}</td>
            </tr>
          ))}
        </tbody>
      ))}
    </table>
  )
}

function LeftPanel() {
  return (
    <aside className="flex w-[272px] shrink-0 flex-col border-r-2 border-[#777] bg-[#f0f0f0]">
      <div className="flex h-[22px] shrink-0 items-center pl-0.5 pr-[7px]">
        <h2 className="text-xs font-bold">Steel Connection Inspector</h2>
        <button type="button" aria-label="Close panel" className="ml-auto flex h-2.5 w-2.5 items-center justify-center bg-[#c0c0c0]">
          <svg width="8" height="8" viewBox="0 0 8 8">
            <path d="m1 1 6 6M7 1 1 7" stroke="#777" />
          </svg>
        </button>
      </div>
      <div className="mr-1 h-0.5 shrink-0 border-t border-[#aaa] bg-white" />

      <section className="mr-[5px] flex h-[286px] shrink-0 flex-col border-2 border-r-1 border-b-1 border-[#6a6a6a] border-t-[#777]">
        <div className="flex h-[27px] items-center pl-[5px]">
          <button type="button" aria-label="Delete">
            <svg width="17" height="15" viewBox="0 0 17 15">
              <path d="m1 1 14 13M15 1 2 14" stroke="#e02020" strokeWidth="2" />
            </svg>
          </button>
          <button type="button" aria-label="Verify" className="ml-2.5">
            <svg width="13" height="16" viewBox="0 0 13 16">
              <path d="M.500.500h9l3 3v12H.500z" fill="#e4f0fc" stroke="#5a8cc4" />
              <path d="m3 9 2.500 2.500L10 6" fill="none" stroke="#e01818" strokeWidth="2" />
            </svg>
          </button>
          <button type="button" aria-label="Help" className="ml-[18px]">
            <svg width="17" height="17" viewBox="0 0 17 17">
              <circle cx="8.500" cy="8.500" r="8" fill="url(#ball)" stroke="#234" strokeWidth=".6" />
              <text x="8.500" y="13" fontSize="12" fontWeight="700" textAnchor="middle" fill="#fff" fontFamily="Liberation Sans">
                ?
              </text>
            </svg>
          </button>
        </div>
        <div className="pl-px">
          <ConnectionList />
        </div>
      </section>
      <SlantTab label="Steel connections" width={121} className={`text-[11px] ${ui}`} />
      <div className="mr-1 mt-0.5 h-1 shrink-0 border-b border-[#999] bg-[#fafafa]" />

      <section className="mr-[5px] flex min-h-0 flex-1 border-t border-[#666]">
        <div className="min-h-0 w-[231px] overflow-hidden">
          <PropertyTable />
        </div>
        <div className="ml-auto flex w-4 flex-col bg-[#f0f0f0]">
          <button type="button" aria-label="Scroll up" className="flex h-4 items-center justify-center"><Chevron dir="up" /></button>
          <span className="w-full flex-[180] bg-[#cdcdcd]" />
          <span className="flex-[65]" />
          <button type="button" aria-label="Scroll down" className="flex h-4 items-center justify-center"><Chevron dir="down" /></button>
        </div>
      </section>
      <SlantTab label="Properties" width={82} className="text-xs" />
      <div className="flex h-[23px] shrink-0 items-start gap-0.5 border-b border-[#999] pl-px pt-0.5">
        <button type="button" aria-label="Object tree" className="flex h-[17px] w-[21px] items-center justify-center border-b border-r border-[#222]">
          <svg width="13" height="13" viewBox="0 0 13 13" shapeRendering="crispEdges">
            <path d="M2.500 1v11M2 2.500h4M2 7.500h5M2 11.500h5" stroke="#357" fill="none" />
            <path d="M5 2h3v2H5z" fill="#357" />
            <path d="M7 6h5v3H7zM7 10h5v3H7z" fill="#e02020" />
          </svg>
        </button>
        <button type="button" aria-label="Connections" className="flex h-[17px] w-[21px] items-center justify-center border-b border-r border-[#222] bg-white">
          <svg width="13" height="12" viewBox="0 0 13 12">
            <path d="M0 0h13v5H9l-4 4v3H0z" fill="#d02424" />
            <path d="M5 5v4l4-4z" fill="#f88" />
          </svg>
        </button>
        <button type="button" aria-label="Sections" className="flex h-[17px] w-[22px] items-center justify-center border-b border-r border-[#222]">
          <svg width="13" height="12" viewBox="0 0 13 12" shapeRendering="crispEdges">
            <path d="M0 0h13v5H9v7H4V5H0z" fill="#7a8a90" />
            <path d="M1 1h2v2H1zM10 1h2v2h-2zM5 1h2v2H5zM5 8h3v2H5z" fill="#f01818" />
          </svg>
        </button>
      </div>
    </aside>
  )
}

/* ---------- connection view ---------- */

type Pt = [number, number]

// Edge lines of the tube facets, running from the open end (a-b) along dir
function facets(a: Pt, b: Pt, dir: Pt, count: number) {
  return Array.from({ length: count }, (_, i) => {
    const t = i / (count - 1)
    const x = a[0] + (b[0] - a[0]) * t
    const y = a[1] + (b[1] - a[1]) * t
    return `M${x} ${y}l${dir[0]} ${dir[1]}`
  }).join('')
}

function Shade({ id, from, to, dark, core = '#00384c' }: { id: string; from: Pt; to: Pt; dark: number; core?: string }) {
  return (
    <linearGradient id={id} gradientUnits="userSpaceOnUse" x1={from[0]} y1={from[1]} x2={to[0]} y2={to[1]}>
      <stop offset="0" stopColor="#00b4f0" />
      <stop offset={dark * 0.5} stopColor="#00709a" />
      <stop offset={dark} stopColor={core} />
      <stop offset={dark + (1 - dark) * 0.55} stopColor="#00709a" />
      <stop offset="1" stopColor="#00bfff" />
    </linearGradient>
  )
}

function TubeModel() {
  const left = 'M595.500 269 639.500 240.500 779 447V505Q757 502 743 492z'
  const right = 'M989 261.500 1029 295.500 862 493Q846 504 821 507L819 494V460z'
  const mid = 'M777 200H818.500V494Q812 501 798 501 784 501 777 494z'
  const chord = 'M635 493.500H961Q965 526 961 558.500H635Q630 526 635 493.500z'
  return (
    <svg className="block h-full w-full" viewBox="272 100 1043 610" role="img" aria-label="Tube connection model">
      <defs>
        <Shade id="sl" from={[595.5, 269]} to={[639.5, 240.5]} dark={0.4} core="#002c3c" />
        <Shade id="sr" from={[989, 261.5]} to={[1029, 295.5]} dark={0.68} core="#002c3c" />
        <Shade id="sm" from={[777, 0]} to={[818.5, 0]} dark={0.42} core="#005474" />
        <Shade id="sc" from={[0, 493]} to={[0, 559]} dark={0.6} core="#003040" />
        <clipPath id="cl"><path d={left} /></clipPath>
        <clipPath id="cr"><path d={right} /></clipPath>
        <clipPath id="cm"><path d={mid} /></clipPath>
        <clipPath id="cc"><path d={chord} /></clipPath>
      </defs>
      <g fill="none" stroke="#00bfff">
        <g clipPath="url(#cc)">
          <path d={chord} fill="url(#sc)" stroke="none" />
          <path d={facets([637, 494.5], [637, 557.5], [330, 0], 22)} stroke="#00a6e0" shapeRendering="crispEdges" />
        </g>
        <path d={chord} strokeWidth="1.500" />
        <ellipse cx="635.500" cy="526" rx="2.500" ry="32" fill="#00506c" />
        <g clipPath="url(#cl)">
          <path d={left} fill="url(#sl)" stroke="none" />
          <path d={facets([595.5, 269], [639.5, 240.5], [180, 268], 25)} stroke="#00a6e0" strokeWidth=".9" />
        </g>
        <path d="M743 492 595.500 269 639.500 240.500 779 447V505" strokeWidth="1.500" />
        <path d="m598 271 44-28" />
        <g clipPath="url(#cr)">
          <path d={right} fill="url(#sr)" stroke="none" />
          <path d={facets([989, 261.5], [1029, 295.5], [-212, 250], 25)} stroke="#00a6e0" strokeWidth=".9" />
        </g>
        <path d="M819 460 989 261.500 1029 295.500 862 493" strokeWidth="1.500" />
        <g clipPath="url(#cm)">
          <path d={mid} fill="url(#sm)" stroke="none" />
          <path d={facets([779.5, 200], [817.5, 200], [0, 305], 20)} stroke="#0096c8" shapeRendering="crispEdges" />
        </g>
        <path d="M777.500 494V200.500H818V494" strokeWidth="2" />
      </g>
    </svg>
  )
}

const viewTabs = [
  { label: 'Scheme', cls: 'w-[49px] bg-[#dcf0fb]' },
  { label: 'Connection View', cls: 'w-[94px] bg-white h-[22px]' },
  { label: 'Structure', cls: 'w-[54px]' },
  { label: 'Results', cls: 'w-[46px]' },
]

function ConnectionView() {
  return (
    <main className="flex min-w-0 flex-1 flex-col border-b border-[#ddd] bg-[#f0f0f0]">
      <div className="flex min-h-0 flex-1">
        <div className="flex min-w-0 flex-1 flex-col">
          <div role="tablist" className="flex h-[22px] shrink-0 items-end overflow-hidden pl-[3px] text-[11px]">
            {viewTabs.map((t) => (
              <button
                key={t.label}
                type="button"
                role="tab"
                aria-selected={t.label === 'Connection View'}
                className={`h-[19px] whitespace-nowrap border-r border-t border-[#dadada] ${t.cls}`}
              >
                {t.label}
              </button>
            ))}
          </div>
          <div className="min-h-0 flex-1 bg-[#c9ddff]">
            <TubeModel />
          </div>
        </div>
        <div className="flex w-[17px] shrink-0 flex-col border-l border-white">
          <button type="button" aria-label="Scroll up" className="flex h-[18px] items-center justify-center"><Chevron dir="up" /></button>
          <span className="flex-[246]" />
          <span className="flex-[154] bg-[#c0c0c0]" />
          <span className="flex-[198]" />
          <button type="button" aria-label="Scroll down" className="flex h-[17px] items-center justify-center"><Chevron dir="down" /></button>
        </div>
      </div>
      <div className="flex h-[17px] shrink-0 border-t border-white">
        <button type="button" aria-label="Scroll left" className="flex w-[17px] items-center justify-center"><Chevron dir="left" /></button>
        <span className="flex-[268]" />
        <span className="flex-[443] bg-[#c0c0c0]" />
        <span className="flex-[298]" />
        <button type="button" aria-label="Scroll right" className="flex w-[17px] items-center justify-center"><Chevron dir="right" /></button>
        <svg width="17" height="16" viewBox="0 0 17 16" aria-hidden="true">
          <path d="M12 4h2v2h-2zM8 8h2v2H8zM12 8h2v2h-2zM4 12h2v2H4zM8 12h2v2H8zM12 12h2v2h-2z" fill="#b8b8b8" />
        </svg>
      </div>
    </main>
  )
}

function SideButton({ label, children }: { label: string; children: ReactNode }) {
  return (
    <button type="button" aria-label={label} className="flex h-[29px] w-full shrink-0 items-center justify-center">
      <svg width="24" height="24" viewBox="0 0 24 24" shapeRendering="crispEdges">
        {children}
      </svg>
    </button>
  )
}

function SideToolbar() {
  const grip = 'mx-0.5 my-[3px] h-0.5 shrink-0 bg-[repeating-linear-gradient(90deg,#b4b4b4_0_2px,transparent_2px_5px)]'
  return (
    <div className="flex w-[34px] shrink-0 flex-col overflow-hidden border-l-2 border-white bg-[#f0f0f0] pr-0.5">
      <div className="h-[9px] shrink-0 border-b border-[#999] bg-white" />
      <div className={grip} />
      <div className="flex shrink-0 flex-col gap-2">
        {sideIcons.map((group) => (
          <div key={group[0].label}>
            {group.map((i) => (
              <SideButton key={i.label} label={i.label}>{i.art}</SideButton>
            ))}
          </div>
        ))}
      </div>
      <div className="h-px shrink-0 bg-[#999]" />
      <div className={grip} />
      {disabledIcons.map((i) => (
        <SideButton key={i.label} label={i.label}>{i.art}</SideButton>
      ))}
    </div>
  )
}

function Watermark() {
  return (
    <div className="pointer-events-none absolute bottom-2 left-[600px] w-[166px] text-center" aria-hidden="true">
      <div className="h-10 overflow-hidden font-['DejaVu_Sans',sans-serif] text-[56px] leading-[64px] font-bold text-[#999]/25" dir="rtl">
        مستقل
      </div>
      <div className="mt-[18px] text-[27px] leading-8 font-bold text-[#888]/20">mostaql.com</div>
    </div>
  )
}

export default function App() {
  return (
    <div className="relative flex h-screen flex-col overflow-hidden bg-[#f0f0f0] font-['Liberation_Sans',Arial,sans-serif] text-black">
      <Defs />
      <Header />
      <Toolbars />
      <div className="flex min-h-0 flex-1">
        <LeftPanel />
        <ConnectionView />
        <SideToolbar />
      </div>
      <footer className="flex h-10 shrink-0 flex-col border-b-2 border-t border-b-[#444] border-t-[#ccc] pt-0.5">
        <div className="border-b border-[#ccc] pb-0.5">
          <p className="w-[100px] border border-b-white border-r-white border-[#aaa] bg-white pl-0.5 text-[11px] leading-[14px]">Connection View</p>
        </div>
      </footer>
      <Watermark />
    </div>
  )
}
